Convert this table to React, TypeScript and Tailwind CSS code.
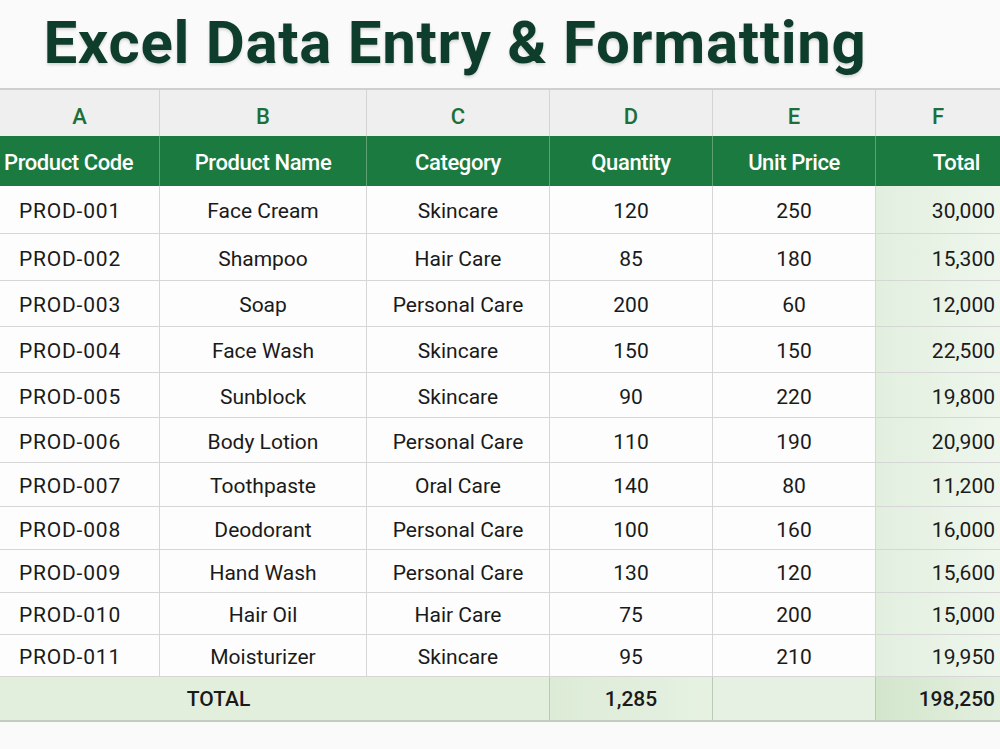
import React from "react";

const rows: [string, string, string, string, string, string, number][] = [
  ["PROD-001", "Face Cream", "Skincare", "120", "250", "30,000", 48],
  ["PROD-002", "Shampoo", "Hair Care", "85", "180", "15,300", 47],
  ["PROD-003", "Soap", "Personal Care", "200", "60", "12,000", 46],
  ["PROD-004", "Face Wash", "Skincare", "150", "150", "22,500", 46],
  ["PROD-005", "Sunblock", "Skincare", "90", "220", "19,800", 45],
  ["PROD-006", "Body Lotion", "Personal Care", "110", "190", "20,900", 45],
  ["PROD-007", "Toothpaste", "Oral Care", "140", "80", "11,200", 44],
  ["PROD-008", "Deodorant", "Personal Care", "100", "160", "16,000", 43],
  ["PROD-009", "Hand Wash", "Personal Care", "130", "120", "15,600", 43],
  ["PROD-010", "Hair Oil", "Hair Care", "75", "200", "15,000", 42],
  ["PROD-011", "Moisturizer", "Skincare", "95", "210", "19,950", 42],
];

const cols = "grid grid-cols-[160px_207px_183px_163px_163px_124px]";

export default function App() {
  return (
    <div className="w-[1000px] h-[749px] bg-[#fafafa] overflow-hidden" style={{ fontFamily: "Roboto, 'Noto Sans', sans-serif" }}>
      <div className="h-[88px] flex items-start justify-center pr-[90px] pt-[9px]">
        <h1 className="text-[60px] font-bold text-[#0f3d2b] tracking-[0.7px] leading-[68px]" style={{ fontFamily: "Roboto, sans-serif", textShadow: "0 2px 3px rgba(0,0,0,0.15)" }}>
          Excel Data Entry &amp; Formatting
        </h1>
      </div>
      <div className="border-t-[2px] border-[#cfcfcf]">
        <div className={`${cols} h-[46px] bg-[#efefef] text-[#1c6f3a] text-[22px] font-medium`}>
          {["A", "B", "C", "D", "E", "F"].map((l, i) => (
            <div key={l} className={`flex items-center justify-center pt-[6px] ${i < 5 ? "border-r border-[#d4d4d4]" : ""}`}>{l}</div>
          ))}
        </div>
        <div className={`${cols} h-[50px] bg-[#1b7a3f] text-white text-[22px] font-medium`}>
          {["Product Code", "Product Name", "Category", "Quantity", "Unit Price", "Total"].map((h, i) => (
            <div key={h} className={`flex items-center pt-[3px] ${i === 0 ? "justify-start pl-[4px]" : i === 5 ? "justify-end pr-[20px]" : "justify-center"} ${i < 5 ? "border-r border-[#5f9f74]" : ""}`}>
              <span className="tracking-[-0.4px]">{h}</span>
            </div>
          ))}
        </div>
        {rows.map((r) => (
          <div key={r[0]} className={`${cols} text-[21px] text-[#1a1a1a] border-b border-[#d6d6d6]`} style={{ height: r[6] }}>
            <div className="flex items-center pt-[5px] pl-[19px] border-r border-[#d6d6d6] bg-[#fdfdfd] tracking-[0.8px]">{r[0]}</div>
            <div className="flex items-center pt-[5px] justify-center border-r border-[#d6d6d6] bg-[#fdfdfd]">{r[1]}</div>
            <div className="flex items-center pt-[5px] justify-center border-r border-[#d6d6d6] bg-[#fdfdfd]">{r[2]}</div>
            <div className="flex items-center pt-[5px] justify-center border-r border-[#d6d6d6] bg-[#fdfdfd]">{r[3]}</div>
            <div className="flex items-center pt-[5px] justify-center border-r border-[#d6d6d6] bg-[#fdfdfd]">{r[4]}</div>
            <div className="flex items-center pt-[5px] justify-end pr-[5px] bg-gradient-to-r from-[#e2efdf] to-[#eef6ec]">{r[5]}</div>
          </div>
        ))}
        <div className={`${cols} h-[45px] text-[21px] font-medium text-[#1a1a1a] bg-[#e3efdd] border-b-[2px] border-[#c4cbc2]`}>
          <div className="col-span-3 flex items-center pt-[2px] justify-center pr-[112px] border-r border-[#b9c9b5]">TOTAL</div>
          <div className="flex items-center pt-[2px] justify-center border-r border-[#b9c9b5] bg-gradient-to-r from-[#dcebd6] to-[#e6f1e2]">1,285</div>
          <div className="flex items-center justify-center border-r border-[#b9c9b5] bg-[#e6f1e3]"></div>
          <div className="flex items-center pt-[2px] justify-end pr-[5px] bg-gradient-to-r from-[#d3e6cc] to-[#e3efde]">198,250</div>
        </div>
      </div>
    </div>
  );
}
